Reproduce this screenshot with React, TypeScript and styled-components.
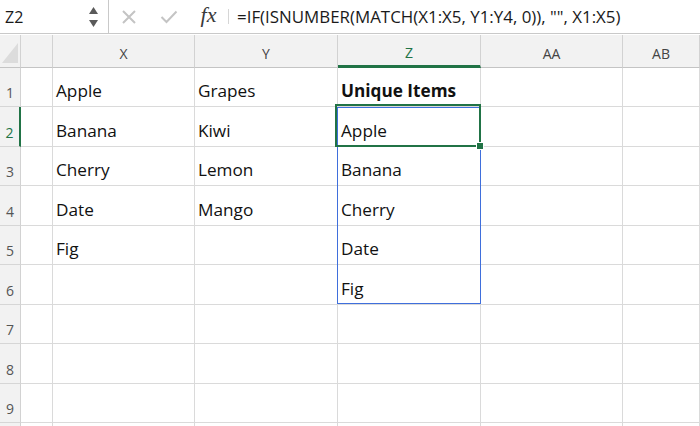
import React from 'react';
import styled, { createGlobalStyle, css } from 'styled-components';

const Global = createGlobalStyle`
  html, body { margin: 0; padding: 0; background: #ffffff; }
  body { font-family: "Open Sans", "Noto Sans", sans-serif; color: #1a1a1a; }
  * { box-sizing: border-box; }
`;

const Frame = styled.div`
  width: 700px;
  height: 426px;
  overflow: hidden;
  display: flex;
  flex-direction: column;
  background: #ffffff;
`;

const FormulaBar = styled.div`
  flex: none;
  height: 34px;
  border-bottom: 1px solid #c9c9c9;
  margin-bottom: 1px;
  display: flex;
  align-items: stretch;
`;

const NameBox = styled.div`
  width: 109px;
  border-right: 1px solid #c9c9c9;
  display: flex;
  align-items: center;
  justify-content: space-between;
  padding: 0 10px 0 5px;
  font-size: 16px;
  color: #1a1a1a;
`;

const Spinner = styled.div`
  display: flex;
  flex-direction: column;
  gap: 6px;
`;

const BarButton = styled.div<{ $w: number }>`
  width: ${(p) => p.$w}px;
  display: flex;
  align-items: center;
  justify-content: center;
`;

const FxLabel = styled.span`
  font-family: "Liberation Serif", "DejaVu Serif", serif;
  font-style: italic;
  font-size: 22px;
  color: #3a3a3a;
  margin-top: -3px;
`;

const Divider = styled.div`
  width: 1px;
  margin: 9px 0;
  background: #d6d6d6;
`;

const FormulaText = styled.div`
  padding-left: 8px;
  display: flex;
  align-items: center;
  font-size: 16.9px;
  color: #1a1a1a;
  white-space: nowrap;
`;

const SheetWrap = styled.div`
  position: relative;
  flex: 1;
  overflow: hidden;
`;

const Sheet = styled.div`
  display: grid;
  grid-template-columns: 21px 32px 142px 143px 143px 142px 1fr;
  grid-template-rows: 33px 39px 40px 39px 40px 39px 40px 39px 40px 39px 40px;
`;

const HeadBase = css`
  background: #f2f2f2;
  color: #444;
  font-size: 14px;
  border-right: 1px solid #d2d2d2;
`;

const Corner = styled.div`
  ${HeadBase};
  border-bottom: 1px solid #c4c4c4;
  display: flex;
  align-items: flex-end;
  justify-content: flex-end;
  padding: 0 2px 4px 0;
`;

const ColHead = styled.div<{ $sel?: boolean }>`
  ${HeadBase};
  display: flex;
  align-items: center;
  justify-content: center;
  padding-top: 4px;
  border-bottom: ${(p) => (p.$sel ? '3px solid #217346' : '1px solid #c4c4c4')};
  color: ${(p) => (p.$sel ? '#217346' : '#444')};
`;

const RowHead = styled.div<{ $sel?: boolean }>`
  ${HeadBase};
  display: flex;
  align-items: flex-end;
  justify-content: center;
  padding-bottom: 4px;
  border-bottom: 1px solid #d6d6d6;
  border-right: ${(p) => (p.$sel ? '2px solid #217346' : '1px solid #d2d2d2')};
  color: ${(p) => (p.$sel ? '#217346' : '#555')};
`;

const Cell = styled.div<{ $bold?: boolean }>`
  border-right: 1px solid #dadada;
  border-bottom: 1px solid #dadada;
  display: flex;
  align-items: flex-end;
  padding: 0 3px 4px 3px;
  font-size: 17.2px;
  font-weight: ${(p) => (p.$bold ? 700 : 400)};
  color: #111;
  white-space: nowrap;
  overflow: hidden;
`;

const SpillRange = styled.div`
  position: absolute;
  left: 337px;
  top: 72px;
  width: 144px;
  height: 197px;
  border: 1px solid #3f6fdc;
  pointer-events: none;
`;

const ActiveCell = styled.div`
  position: absolute;
  left: 335px;
  top: 69px;
  width: 146px;
  height: 43px;
  border: 2px solid #217346;
  pointer-events: none;
`;

const FillHandle = styled.div`
  position: absolute;
  right: -5px;
  bottom: -5px;
  width: 8px;
  height: 8px;
  background: #217346;
  border: 1px solid #ffffff;
`;

const columns = ['', 'X', 'Y', 'Z', 'AA', 'AB'];

type CellData = { text: string; bold?: boolean };

const blank: CellData[] = [{ text: '' }, { text: '' }, { text: '' }, { text: '' }, { text: '' }, { text: '' }];

const rows: CellData[][] = [
  [{ text: '' }, { text: 'Apple' }, { text: 'Grapes' }, { text: 'Unique Items', bold: true }, { text: '' }, { text: '' }],
  [{ text: '' }, { text: 'Banana' }, { text: 'Kiwi' }, { text: 'Apple' }, { text: '' }, { text: '' }],
  [{ text: '' }, { text: 'Cherry' }, { text: 'Lemon' }, { text: 'Banana' }, { text: '' }, { text: '' }],
  [{ text: '' }, { text: 'Date' }, { text: 'Mango' }, { text: 'Cherry' }, { text: '' }, { text: '' }],
  [{ text: '' }, { text: 'Fig' }, { text: '' }, { text: 'Date' }, { text: '' }, { text: '' }],
  [{ text: '' }, { text: '' }, { text: '' }, { text: 'Fig' }, { text: '' }, { text: '' }],
  blank,
  blank,
  blank,
  blank,
];

const VISIBLE_ROW_LABELS = 9;

const CancelIcon = () => (
  <svg width="16" height="16" viewBox="0 0 16 16">
    <path d="M2 2 L14 14 M14 2 L2 14" stroke="#c4c4c4" strokeWidth="2" fill="none" />
  </svg>
);

const EnterIcon = () => (
  <svg width="18" height="14" viewBox="0 0 18 14">
    <path d="M1.5 7 L6.5 12 L16.5 1.5" stroke="#c4c4c4" strokeWidth="2" fill="none" />
  </svg>
);

const Arrow = ({ up }: { up?: boolean }) => (
  <svg width="9" height="7" viewBox="0 0 9 7">
    <path d={up ? 'M4.5 0 L9 7 L0 7 Z' : 'M0 0 L9 0 L4.5 7 Z'} fill="#5a5a5a" />
  </svg>
);

const CornerMark = () => (
  <svg width="16" height="20" viewBox="0 0 16 20">
    <path d="M16 0 L16 20 L0 20 Z" fill="#dcdcdc" />
  </svg>
);

export default function App() {
  return (
    <Frame>
      <Global />
      <FormulaBar>
        <NameBox>
          <span>Z2</span>
          <Spinner>
            <Arrow up />
            <Arrow />
          </Spinner>
        </NameBox>
        <BarButton $w={40}>
          <CancelIcon />
        </BarButton>
        <BarButton $w={40}>
          <EnterIcon />
        </BarButton>
        <BarButton $w={39}>
          <FxLabel>fx</FxLabel>
        </BarButton>
        <Divider />
        <FormulaText>=IF(ISNUMBER(MATCH(X1:X5, Y1:Y4, 0)), "", X1:X5)</FormulaText>
      </FormulaBar>
      <SheetWrap>
        <Sheet>
          <Corner>
            <CornerMark />
          </Corner>
          {columns.map((c, i) => (
            <ColHead key={i} $sel={c === 'Z'}>
              {c}
            </ColHead>
          ))}
          {rows.map((r, ri) => (
            <React.Fragment key={ri}>
              <RowHead $sel={ri === 1}>{ri < VISIBLE_ROW_LABELS ? ri + 1 : ''}</RowHead>
              {r.map((cell, ci) => (
                <Cell key={ci} $bold={cell.bold}>
                  {cell.text}
                </Cell>
              ))}
            </React.Fragment>
          ))}
        </Sheet>
        <SpillRange />
        <ActiveCell>
          <FillHandle />
        </ActiveCell>
      </SheetWrap>
    </Frame>
  );
}
